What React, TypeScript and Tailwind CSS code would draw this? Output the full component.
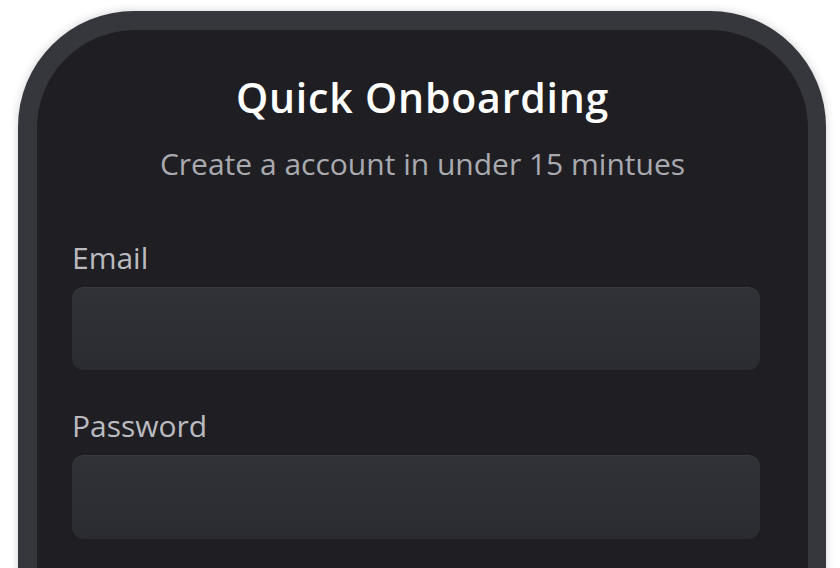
export default function App() {
  return (
    <div className="w-[840px] h-[568px] overflow-hidden bg-white" style={{ fontFamily: '"Open Sans", Lato, sans-serif' }}>
      <div className="ml-[18px] mt-[11px] w-[808px] h-[600px] rounded-t-[116px] bg-[#36373c] pt-[19px] pl-[19px] pr-[18px] shadow-[0_0_10px_rgba(0,0,0,0.18)]">
        <div className="h-[600px] rounded-t-[98px] bg-[#1f1f23] pt-[43px] pl-[35px] pr-[48px]">
          <h1 className="ml-[13px] text-center text-[41px] leading-[48px] tracking-[0.8px] font-semibold text-white">Quick Onboarding</h1>
          <p className="ml-[13px] mt-[25px] text-center text-[30px] leading-[36px] text-[#a9aab0]">
            Create a account in under 15 mintues
          </p>

          <label className="block mt-[58px] text-[30px] leading-[36px] text-[#babbc0]">Email</label>
          <div className="mt-[11px] h-[83px] rounded-[12px] bg-gradient-to-b from-[#313237] to-[#2b2c31] shadow-[inset_0_1px_0_rgba(255,255,255,0.04)]" />

          <label className="block mt-[38px] text-[30px] leading-[36px] text-[#babbc0]">Password</label>
          <div className="mt-[11px] h-[84px] rounded-[12px] bg-gradient-to-b from-[#313237] to-[#2b2c31] shadow-[inset_0_1px_0_rgba(255,255,255,0.04)]" />
        </div>
      </div>
    </div>
  )
}
